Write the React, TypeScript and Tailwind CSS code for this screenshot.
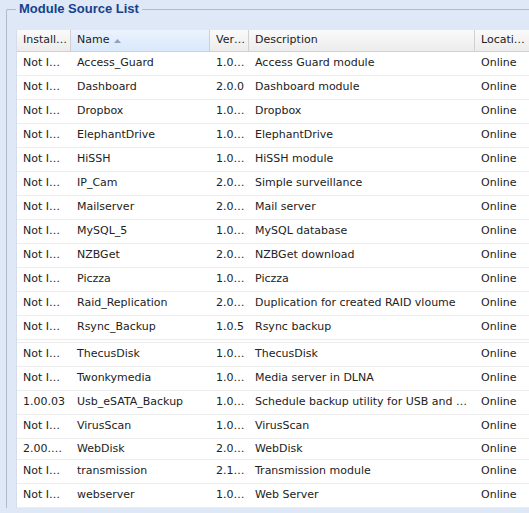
import React from 'react';

type Row = { inst: string; name: string; ver: string; desc: string; loc: string; h: string };

const rows: Row[] = [
	{ inst: 'Not I…', name: 'Access_Guard', ver: '1.0…', desc: 'Access Guard module', loc: 'Online', h: 'h-[24px]' },
	{ inst: 'Not I…', name: 'Dashboard', ver: '2.0.0', desc: 'Dashboard module', loc: 'Online', h: 'h-[24px]' },
	{ inst: 'Not I…', name: 'Dropbox', ver: '1.0…', desc: 'Dropbox', loc: 'Online', h: 'h-[24px]' },
	{ inst: 'Not I…', name: 'ElephantDrive', ver: '1.0…', desc: 'ElephantDrive', loc: 'Online', h: 'h-[24px]' },
	{ inst: 'Not I…', name: 'HiSSH', ver: '1.0…', desc: 'HiSSH module', loc: 'Online', h: 'h-[24px]' },
	{ inst: 'Not I…', name: 'IP_Cam', ver: '2.0…', desc: 'Simple surveillance', loc: 'Online', h: 'h-[24px]' },
	{ inst: 'Not I…', name: 'Mailserver', ver: '2.0…', desc: 'Mail server', loc: 'Online', h: 'h-[24px]' },
	{ inst: 'Not I…', name: 'MySQL_5', ver: '1.0…', desc: 'MySQL database', loc: 'Online', h: 'h-[24px]' },
	{ inst: 'Not I…', name: 'NZBGet', ver: '2.0…', desc: 'NZBGet download', loc: 'Online', h: 'h-[24px]' },
	{ inst: 'Not I…', name: 'Piczza', ver: '1.0…', desc: 'Piczza', loc: 'Online', h: 'h-[24px]' },
	{ inst: 'Not I…', name: 'Raid_Replication', ver: '2.0…', desc: 'Duplication for created RAID vloume', loc: 'Online', h: 'h-[24px]' },
	{ inst: 'Not I…', name: 'Rsync_Backup', ver: '1.0.5', desc: 'Rsync backup', loc: 'Online', h: 'h-[24px]' },
];

const rows2: Row[] = [
	{ inst: 'Not I…', name: 'ThecusDisk', ver: '1.0…', desc: 'ThecusDisk', loc: 'Online', h: 'h-[24px]' },
	{ inst: 'Not I…', name: 'Twonkymedia', ver: '1.0…', desc: 'Media server in DLNA', loc: 'Online', h: 'h-[24px]' },
	{ inst: '1.00.03', name: 'Usb_eSATA_Backup', ver: '1.0…', desc: 'Schedule backup utility for USB and …', loc: 'Online', h: 'h-[24px]' },
	{ inst: 'Not I…', name: 'VirusScan', ver: '1.0…', desc: 'VirusScan', loc: 'Online', h: 'h-[24px]' },
	{ inst: '2.00.…', name: 'WebDisk', ver: '2.0…', desc: 'WebDisk', loc: 'Online', h: 'h-[21px]' },
	{ inst: 'Not I…', name: 'transmission', ver: '2.1…', desc: 'Transmission module', loc: 'Online', h: 'h-[24px]' },
	{ inst: 'Not I…', name: 'webserver', ver: '1.0…', desc: 'Web Server', loc: 'Online', h: 'h-[24px]' },
];

const cols = ['w-[54px]', 'w-[139px]', 'w-[39px]', 'w-[226px]', 'w-[80px]'];

function GridRow({ r }: { r: Row }) {
	const cells = [r.inst, r.name, r.ver, r.desc, r.loc];
	return (
		<div className={`flex items-center border-b border-[#ededed] ${r.h}`}>
			{cells.map((c, i) => (
				<div key={i} className={`${cols[i]} shrink-0 pl-[6px] pr-[4px] whitespace-nowrap overflow-hidden`}>
					{c}
				</div>
			))}
		</div>
	);
}

function HeaderCell({ label, w, sorted }: { label: string; w: string; sorted?: boolean }) {
	return (
		<div
			className={`${w} shrink-0 h-full flex items-center pl-[6px] border-r border-[#d0d0d0] whitespace-nowrap ${
				sorted ? 'bg-gradient-to-b from-[#ebf3fd] to-[#d9e8fb]' : 'bg-gradient-to-b from-[#fafafa] to-[#ececec]'
			}`}
		>
			{label}
			{sorted && (
				<svg width="7" height="4" viewBox="0 0 7 4" className="ml-[5px]">
					<path d="M0 4 L3.5 0 L7 4 Z" fill="#8ea3c2" />
				</svg>
			)}
		</div>
	);
}

export default function App() {
	return (
		<div className="w-[529px] h-[513px] overflow-hidden bg-[#dfe8f6] text-[11px] text-[#222] font-['DejaVu_Sans',sans-serif]">
			<fieldset className="ml-[6px] mt-[2px] w-[600px] border-l border-t border-[#b5b8c8] pl-[9px] pt-[14px] rounded-tl-[2px]">
				<legend className="px-[3px] text-[13px] leading-[14px] font-bold text-[#15428b] font-['Liberation_Sans',sans-serif]">
					Module Source List
				</legend>
				<div className="bg-white border-l border-[#d5dde8]">
					<div className="flex h-[22px] border-b border-[#d0d0d0]">
						<HeaderCell label="Install…" w="w-[54px]" />
						<HeaderCell label="Name" w="w-[139px]" sorted />
						<HeaderCell label="Ver…" w="w-[39px]" />
						<HeaderCell label="Description" w="w-[226px]" />
						<HeaderCell label="Locati…" w="w-[80px]" />
					</div>
					{rows.map((r) => (
						<GridRow key={r.name} r={r} />
					))}
					<div className="h-[3px] border-b border-[#ededed]" />
					{rows2.map((r) => (
						<GridRow key={r.name} r={r} />
					))}
				</div>
			</fieldset>
		</div>
	);
}
